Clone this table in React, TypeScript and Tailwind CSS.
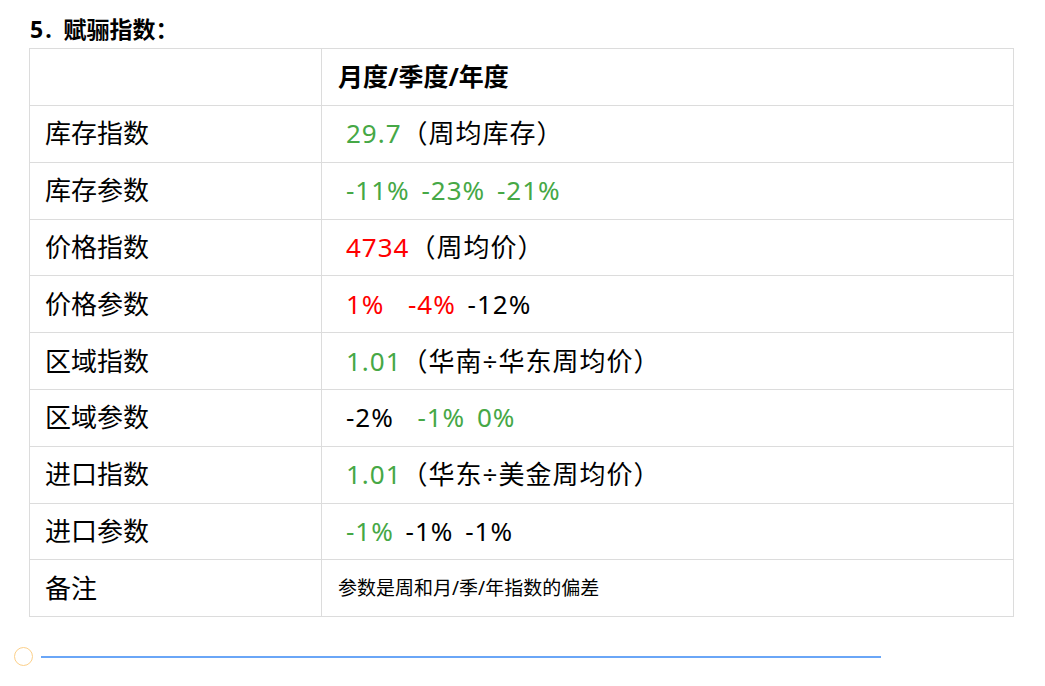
const G = 'text-[#46a846]'
const R = 'text-[#ff0000]'

type Part = { t: string; c?: string }

const rows: { label: string; parts: Part[] }[] = [
  { label: '库存指数', parts: [{ t: '29.7', c: G }, { t: '（周均库存）' }] },
  { label: '库存参数', parts: [{ t: '-11% -23% -21%', c: G }] },
  { label: '价格指数', parts: [{ t: '4734', c: R }, { t: '（周均价）' }] },
  { label: '价格参数', parts: [{ t: '1%  -4%', c: R }, { t: ' -12%' }] },
  { label: '区域指数', parts: [{ t: '1.01', c: G }, { t: '（华南÷华东周均价）' }] },
  { label: '区域参数', parts: [{ t: '-2%  ' }, { t: '-1% 0%', c: G }] },
  { label: '进口指数', parts: [{ t: '1.01', c: G }, { t: '（华东÷美金周均价）' }] },
  { label: '进口参数', parts: [{ t: '-1%', c: G }, { t: ' -1% -1%' }] },
]

export default function App() {
  return (
    <div
      className="w-[1045px] h-[686px] bg-white text-black overflow-hidden"
      style={{ fontFamily: '"Noto Sans", "Noto Sans CJK SC", sans-serif' }}
    >
      <div className="pl-[30px] pt-[12px] h-[48px] text-[23px] font-bold leading-[34px]">
        <span className="tracking-[2px]">5. </span>
        <span className="ml-[2px]">赋骊指数：</span>
      </div>

      <table className="ml-[29px] w-[985px] border-collapse">
        <tbody>
          <tr>
            <td className="w-[292px] h-[57px] border border-[#dcdcdc]"></td>
            <td className="h-[57px] border border-[#dcdcdc] pl-[16px] text-[25px] font-bold">月度/季度/年度</td>
          </tr>
          {rows.map((r) => (
            <tr key={r.label}>
              <td className="h-[56.8px] border border-[#dcdcdc] pl-[15px] text-[26px]">{r.label}</td>
              <td className="h-[56.8px] border border-[#dcdcdc] pl-[24px] text-[26px] whitespace-pre">
                {r.parts.map((p, i) => (
                  <span key={i} className={`${p.c ?? ''} tracking-[1px] [word-spacing:4px]`}>
                    {p.t}
                  </span>
                ))}
              </td>
            </tr>
          ))}
          <tr>
            <td className="h-[56.8px] border border-[#dcdcdc] pl-[15px] text-[26px]">备注</td>
            <td className="h-[56.8px] border border-[#dcdcdc] pl-[16px] text-[19px]">参数是周和月/季/年指数的偏差</td>
          </tr>
        </tbody>
      </table>

      <div className="flex items-center mt-[30px] pl-[14px]">
        <div className="w-[19px] h-[19px] rounded-full border-[1.5px] border-[#fcd08a]"></div>
        <div className="ml-[8px] w-[840px] h-[2px] bg-[#6aa6f7]"></div>
      </div>
    </div>
  )
}
